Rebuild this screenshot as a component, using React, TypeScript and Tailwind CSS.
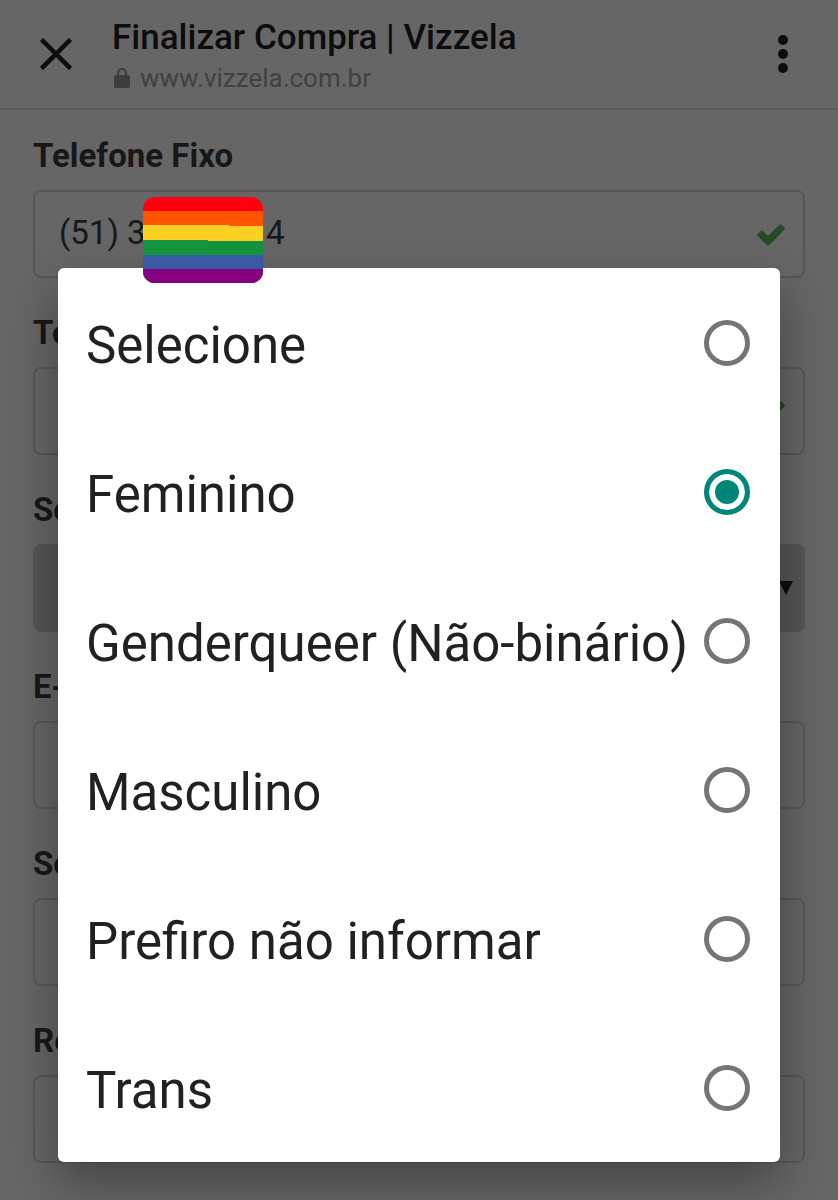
import { useState } from 'react';
import type { ReactNode } from 'react';

const OPTIONS = ['Selecione', 'Feminino', 'Genderqueer (Não-binário)', 'Masculino', 'Prefiro não informar', 'Trans'];

function CheckIcon() {
  return (
    <svg viewBox="0 0 28 22" className="pointer-events-none absolute right-5 top-[34px] h-[22px] w-7 fill-[#5cb85c]" aria-hidden="true">
      <path d="M0.6 9.9 3.8 6.7Q4.7 6 5.6 6.7L11 12 22.4.7Q23.5-.2 24.5.7L27.6 3.8Q28.4 4.7 27.6 5.6L12 21.2Q11 22 10 21.2L.6 11.8Q-.2 10.8.6 9.9Z" />
    </svg>
  );
}

function Flag() {
  return (
    <svg viewBox="0 0 120 86" className="absolute -top-[71px] left-[85px] h-[86px] w-[120px]" role="img" aria-label="Arco-íris">
      <clipPath id="flag">
        <rect width="120" height="86" rx="12" />
      </clipPath>
      <g clipPath="url(#flag)">
        <rect width="120" height="86" fill="#ff000f" />
        <rect y="14" width="120" height="72" fill="#ff5400" />
        <path d="M0 28H86L87 29H120V86H0Z" fill="#fcd124" />
        <path d="M0 43H65V44H120V86H0Z" fill="#15923e" />
        <rect y="58" width="120" height="28" fill="#385aa4" />
        <rect y="72" width="120" height="14" fill="#870082" />
      </g>
    </svg>
  );
}

function Field({ id, label, children }: { id: string; label: string; children: ReactNode }) {
  return (
    <div>
      <label htmlFor={id} className="mb-3.5 block text-[33px] font-bold leading-10 text-[#3d3d3d]">{label}</label>
      <div className="relative">{children}</div>
    </div>
  );
}

const inputBase = 'block h-[88px] w-full rounded-lg border-2 px-6 pb-1 text-[33px] text-[#3d3d3d] outline-none';
const validInput = `${inputBase} border-[#c5e0c7]`;
const plainInput = `${inputBase} border-[#d9d9d9]`;

export default function App() {
  const [gender, setGender] = useState('Feminino');

  return (
    <div className="relative min-h-screen bg-white font-[Roboto,sans-serif]">
      <header className="flex h-[110px] items-center border-b-2 border-[#e5e5e5] pl-10 pr-[50px]">
        <button aria-label="Fechar">
          <svg viewBox="0 0 32 32" className="size-8 stroke-[#222] stroke-[4.5]">
            <path d="M1.5 1.5 30.5 30.5M30.5 1.5 1.5 30.5" />
          </svg>
        </button>
        <div className="ml-10 min-w-0 flex-1 pt-2">
          <h1 className="text-[35px] font-medium leading-10 text-[#222]">Finalizar Compra | Vizzela</h1>
          <p className="flex items-center gap-2.5 text-[26px] leading-10 text-[#a3a3a3]">
            <svg viewBox="0 0 16 20" className="ml-0.5 h-5 w-4 fill-[#999]" aria-hidden="true">
              <path fillRule="evenodd" d="M3 7V5A5 5 0 0 1 13 5V7H14Q16 7 16 9V18Q16 20 14 20H2Q0 20 0 18V9Q0 7 2 7ZM5 7H11V5A3 3 0 0 0 5 5Z" />
            </svg>
            www.vizzela.com.br
          </p>
        </div>
        <button aria-label="Mais opções">
          <svg viewBox="0 0 10 38" className="h-[38px] w-2.5 fill-[#222]">
            <circle cx="5" cy="5" r="5" />
            <circle cx="5" cy="19" r="5" />
            <circle cx="5" cy="33" r="5" />
          </svg>
        </button>
      </header>

      <main className="flex flex-col gap-[35px] px-[33px] pb-8 pt-[26px]">
        <Field id="fixo" label="Telefone Fixo">
          <input id="fixo" type="tel" defaultValue="(51) 3111-1114" className={validInput} />
          <CheckIcon />
        </Field>
        <Field id="celular" label="Tel.">
          <input id="celular" type="tel" className={validInput} />
          <CheckIcon />
        </Field>
        <Field id="sexo" label="Sexo">
          <select id="sexo" value={gender} onChange={(e) => setGender(e.target.value)} className={`${validInput} appearance-none bg-[#d4d4d4]`}>
            {OPTIONS.map((o) => <option key={o}>{o}</option>)}
          </select>
          <svg viewBox="0 0 14 14" className="pointer-events-none absolute right-3 top-[37px] size-3.5 fill-[#222]" aria-hidden="true">
            <path d="M0 0H14L7 14Z" />
          </svg>
        </Field>
        <Field id="email" label="E-mail">
          <input id="email" type="email" className={plainInput} />
        </Field>
        <Field id="senha" label="Senha">
          <input id="senha" type="password" className={plainInput} />
        </Field>
        <Field id="repetir" label="Repetir Senha">
          <input id="repetir" type="password" className={plainInput} />
        </Field>
      </main>

      <div className="absolute inset-0 overflow-hidden bg-black/60 px-[58px] pt-[268px]">
        <div role="dialog" aria-label="Sexo" className="relative rounded-md bg-white shadow-[0_20px_50px_rgba(0,0,0,0.35)]">
          {OPTIONS.map((option) => (
            <label key={option} className="flex h-[149px] items-center justify-between pl-7 pr-[30px] text-[51px] text-[#212121]">
              <span className="whitespace-nowrap pt-2">{option}</span>
              <input
                type="radio"
                name="gender"
                checked={gender === option}
                onChange={() => setGender(option)}
                className="size-[46px] shrink-0 appearance-none rounded-full border-[5px] border-[#757575] checked:border-[#018777] checked:bg-[#018777] checked:shadow-[inset_0_0_0_6px_white]"
              />
            </label>
          ))}
          <Flag />
        </div>
      </div>
    </div>
  );
}
